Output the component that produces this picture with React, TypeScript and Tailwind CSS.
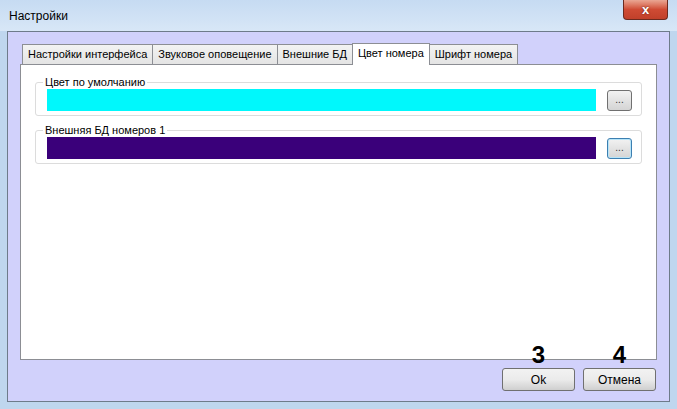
import React from 'react';

const font = { fontFamily: '"Liberation Sans", Arial, sans-serif' };

const tabs = ['Настройки интерфейса', 'Звуковое оповещение', 'Внешние БД', 'Цвет номера', 'Шрифт номера'];

function ColorGroup({ label, color, focused }: { label: string; color: string; focused?: boolean }) {
  return (
    <div className="relative mx-[14px] h-[34px] rounded-[3px] border border-[#dcdcdc] flex items-center pl-[11px] pr-[5px]">
      <span className="absolute left-[7px] top-[-8px] bg-white px-[2px] text-[11px] leading-[14px] text-black">{label}</span>
      <div className="h-[22px] w-[549px] mt-[2px]" style={{ backgroundColor: color }} />
      <button
        className={`ml-auto mr-[4px] mt-[2px] h-[21px] w-[25px] rounded-[3px] text-[10px] leading-none text-[#333] bg-gradient-to-b from-[#f2f2f2] to-[#d4d4d4] border ${
          focused ? 'border-[#3c7fb1] shadow-[inset_0_0_0_1px_#b7e4f8]' : 'border-[#707070]'
        }`}
      >
        ...
      </button>
    </div>
  );
}

export default function App() {
  return (
    <div style={font} className="w-[677px] h-[409px] bg-[#bfd6ee] overflow-hidden relative">
      {/* Title bar */}
      <div className="h-[31px] bg-gradient-to-b from-[#c6dbf2] to-[#d8e7f7] flex items-start px-[9px] pt-[7px] relative">
        <span className="text-[12px] text-black">Настройки</span>
        <div className="absolute right-[9px] top-0 w-[45px] h-[20px] rounded-b-[4px] border border-[#6b2a1f] border-t-0 bg-gradient-to-b from-[#e9a693] via-[#cf4b34] to-[#c1402a] flex items-center justify-center">
          <span className="text-white font-bold text-[13px] leading-none [text-shadow:0_0_2px_#5a1a10]">x</span>
        </div>
      </div>
      {/* Client */}
      <div className="mx-[7px] h-[371px] border border-[#6e7b8a] bg-[#d1d1fb] flex flex-col px-[12px] pt-[10px]">
        <div className="flex items-end h-[22px] pl-[2px]">
          {tabs.map((t, i) =>
            i === 3 ? (
              <div key={t} className="h-[22px] px-[5px] bg-white border border-[#8c8e94] border-b-0 text-[11px] leading-[18px] text-black relative z-10 -mb-px -ml-px">
                {t}
              </div>
            ) : (
              <div key={t} className="h-[20px] px-[5px] bg-gradient-to-b from-[#f3f3f3] to-[#e4e4e4] border border-[#8c8e94] border-b-0 text-[11px] leading-[19px] text-black -ml-px first:ml-0">
                {t}
              </div>
            )
          )}
        </div>
        <div className="w-[637px] h-[296px] bg-white border border-[#8c8e94] pt-[17px] flex flex-col gap-[14px]">
          <ColorGroup label="Цвет по умолчанию" color="#00f8fc" />
          <ColorGroup label="Внешняя БД номеров 1" color="#3a007a" focused />
        </div>
        <div className="flex justify-end pr-[1px] mt-[-14px] relative">
          <div className="flex gap-[8px]">
            {['Ok', 'Отмена'].map((b, i) => (
              <div key={b} className="relative">
                <span className="absolute top-[-3px] left-1/2 -translate-x-1/2 text-[24px] font-bold leading-none text-black">{i === 0 ? '3' : '4'}</span>
                <button className="mt-[22px] w-[73px] h-[23px] rounded-[3px] border border-[#707070] bg-gradient-to-b from-[#f2f2f2] via-[#ebebeb] to-[#cfcfcf] text-[12px] text-black">
                  {b}
                </button>
              </div>
            ))}
          </div>
        </div>
      </div>
    </div>
  );
}
